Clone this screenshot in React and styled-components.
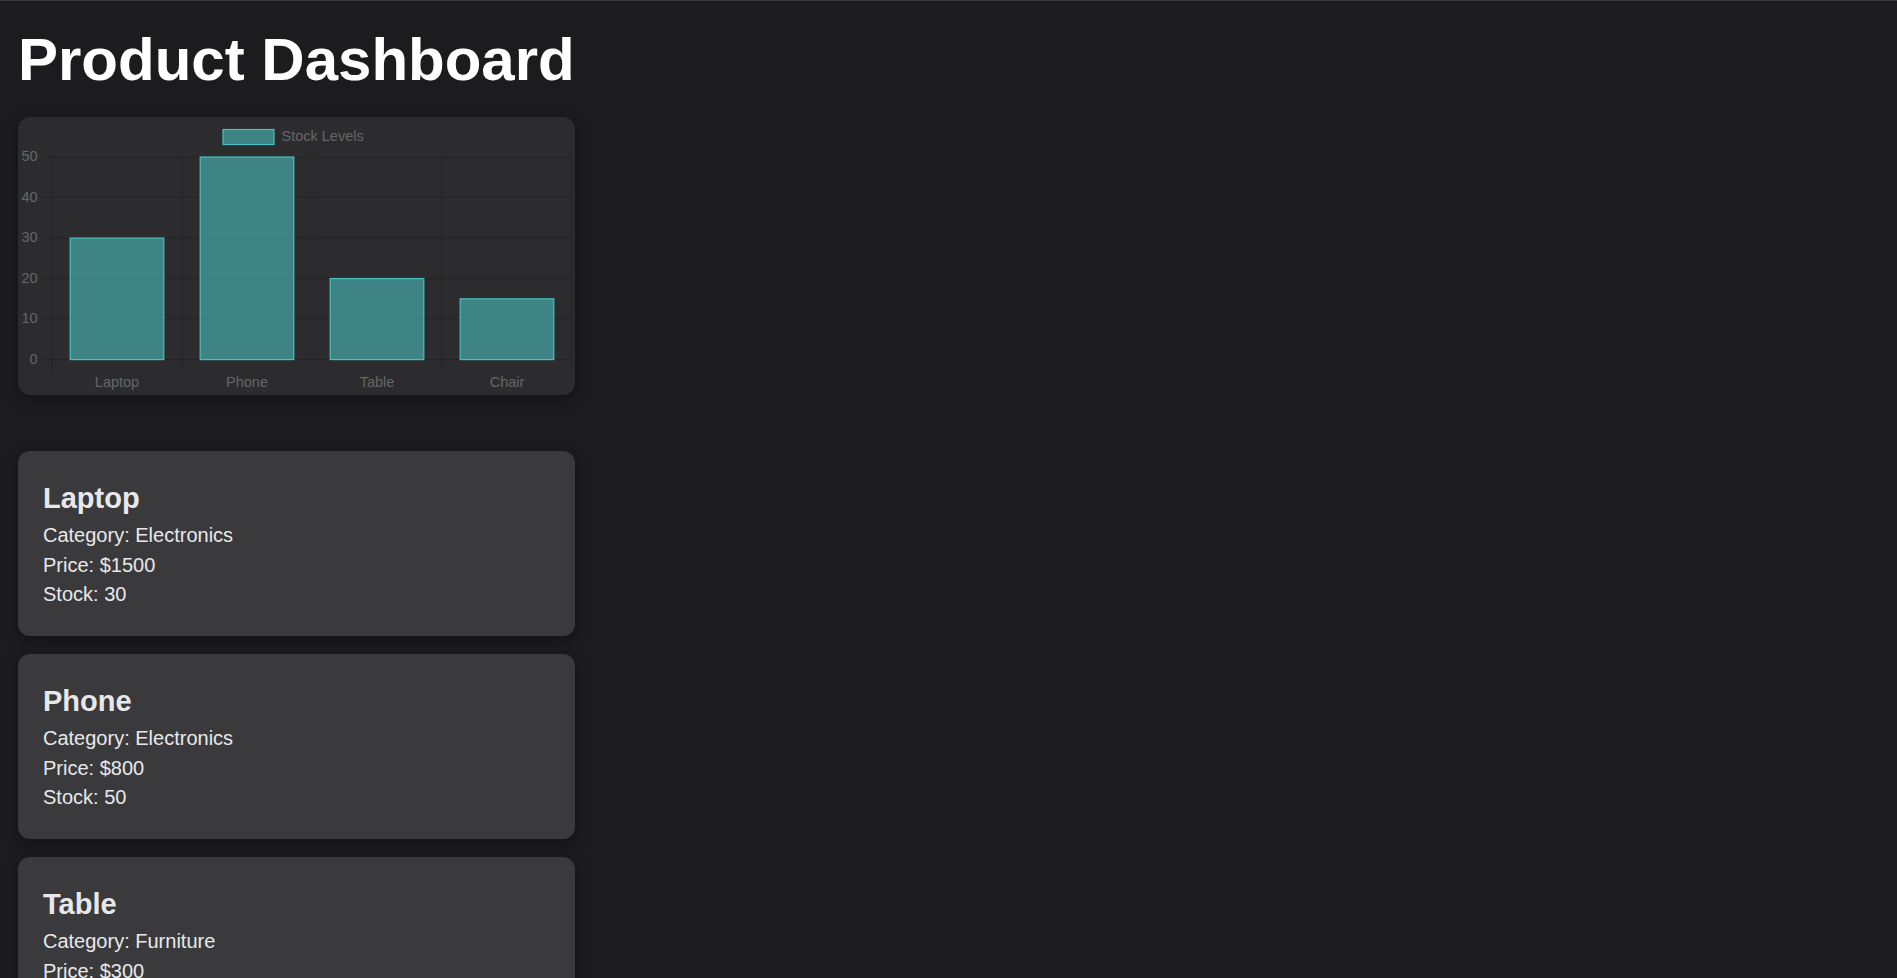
import React from "react";
import styled, { createGlobalStyle } from "styled-components";

const GlobalStyle = createGlobalStyle`
  html, body {
    margin: 0;
    padding: 0;
    background: #1c1c1e;
  }
  body {
    font-family: "Liberation Sans", Arial, Helvetica, sans-serif;
    color: #e5e5e7;
    border-top: 1px solid #3a3a3c;
  }
`;

const Page = styled.main`
  width: 557px;
  padding: 0 18px 92px;
  display: flex;
  flex-direction: column;
`;

const Title = styled.h1`
  margin: 24px 0 23px;
  font-size: 60px;
  line-height: 69px;
  font-weight: 700;
  color: #ffffff;
  white-space: nowrap;
`;

const ChartCard = styled.section`
  height: 278px;
  background: #2c2c2e;
  border-radius: 12px;
  box-shadow: 0 4px 14px rgba(0, 0, 0, 0.35);
  overflow: hidden;
  margin-bottom: 56px;
`;

const ChartSvg = styled.svg`
  display: block;
  width: 100%;
  height: 100%;
  font-family: "Liberation Sans", Arial, Helvetica, sans-serif;
  font-size: 14.5px;
`;

const ProductList = styled.div`
  display: flex;
  flex-direction: column;
  gap: 18.5px;
`;

const ProductCard = styled.article`
  background: #3a3a3c;
  border-radius: 12px;
  padding: 24px 24px 26px 25px;
  box-shadow: 0 4px 14px rgba(0, 0, 0, 0.35);
`;

const ProductName = styled.h2`
  margin: 7px 0 6px;
  font-size: 29px;
  line-height: 33px;
  font-weight: 700;
  color: #e8e8ea;
`;

const ProductLine = styled.p`
  margin: 0;
  font-size: 20px;
  line-height: 29.5px;
  color: #e8e8ea;
`;

const products = [
  { name: "Laptop", category: "Electronics", price: 1500, stock: 30 },
  { name: "Phone", category: "Electronics", price: 800, stock: 50 },
  { name: "Table", category: "Furniture", price: 300, stock: 20 },
  { name: "Chair", category: "Furniture", price: 100, stock: 15 },
];

const W = 557;
const H = 278;
const left = 34;
const right = 554;
const top = 40;
const bottom = 242.6;
const maxVal = 50;
const catW = (right - left) / products.length;
const barW = catW * 0.72;
const gridColor = "rgba(0,0,0,0.18)";
const textColor = "#666666";
const barFill = "rgba(75,192,192,0.6)";
const barStroke = "rgb(75,192,192)";

function StockChart() {
  const ticks = [0, 10, 20, 30, 40, 50];
  const yFor = (v) => bottom - ((bottom - top) * v) / maxVal;
  return (
    <ChartSvg viewBox={`0 0 ${W} ${H}`} preserveAspectRatio="none">
      <rect x="205" y="12.5" width="51" height="15" fill={barFill} stroke={barStroke} strokeWidth="1.2" />
      <text x="263.5" y="19" fill={textColor} dominantBaseline="central">
        Stock Levels
      </text>

      {ticks.map((t) => (
        <g key={t}>
          <line x1="24.4" x2={right} y1={yFor(t)} y2={yFor(t)} stroke={gridColor} strokeWidth="1" />
          <text x="19.6" y={yFor(t) - 1} fill={textColor} textAnchor="end" dominantBaseline="central">
            {t}
          </text>
        </g>
      ))}

      {products.map((_, i) => (
        <line key={i} x1={left + i * catW} x2={left + i * catW} y1={top} y2="252.5" stroke={gridColor} strokeWidth="1" />
      ))}
      <line x1={right} x2={right} y1={top} y2="252.5" stroke={gridColor} strokeWidth="1" />

      {products.map((p, i) => {
        const cx = left + catW * i + catW / 2;
        const y = yFor(p.stock);
        return (
          <g key={p.name}>
            <rect
              x={cx - barW / 2}
              y={y}
              width={barW}
              height={bottom - y}
              fill={barFill}
              stroke={barStroke}
              strokeWidth="1.2"
            />
            <text x={cx} y="264.8" fill={textColor} textAnchor="middle" dominantBaseline="central">
              {p.name}
            </text>
          </g>
        );
      })}
    </ChartSvg>
  );
}

export default function App() {
  return (
    <>
      <GlobalStyle />
      <Page>
        <Title>Product Dashboard</Title>
        <ChartCard>
          <StockChart />
        </ChartCard>
        <ProductList>
          {products.map((p) => (
            <ProductCard key={p.name}>
              <ProductName>{p.name}</ProductName>
              <ProductLine>Category: {p.category}</ProductLine>
              <ProductLine>Price: ${p.price}</ProductLine>
              <ProductLine>Stock: {p.stock}</ProductLine>
            </ProductCard>
          ))}
        </ProductList>
      </Page>
    </>
  );
}
